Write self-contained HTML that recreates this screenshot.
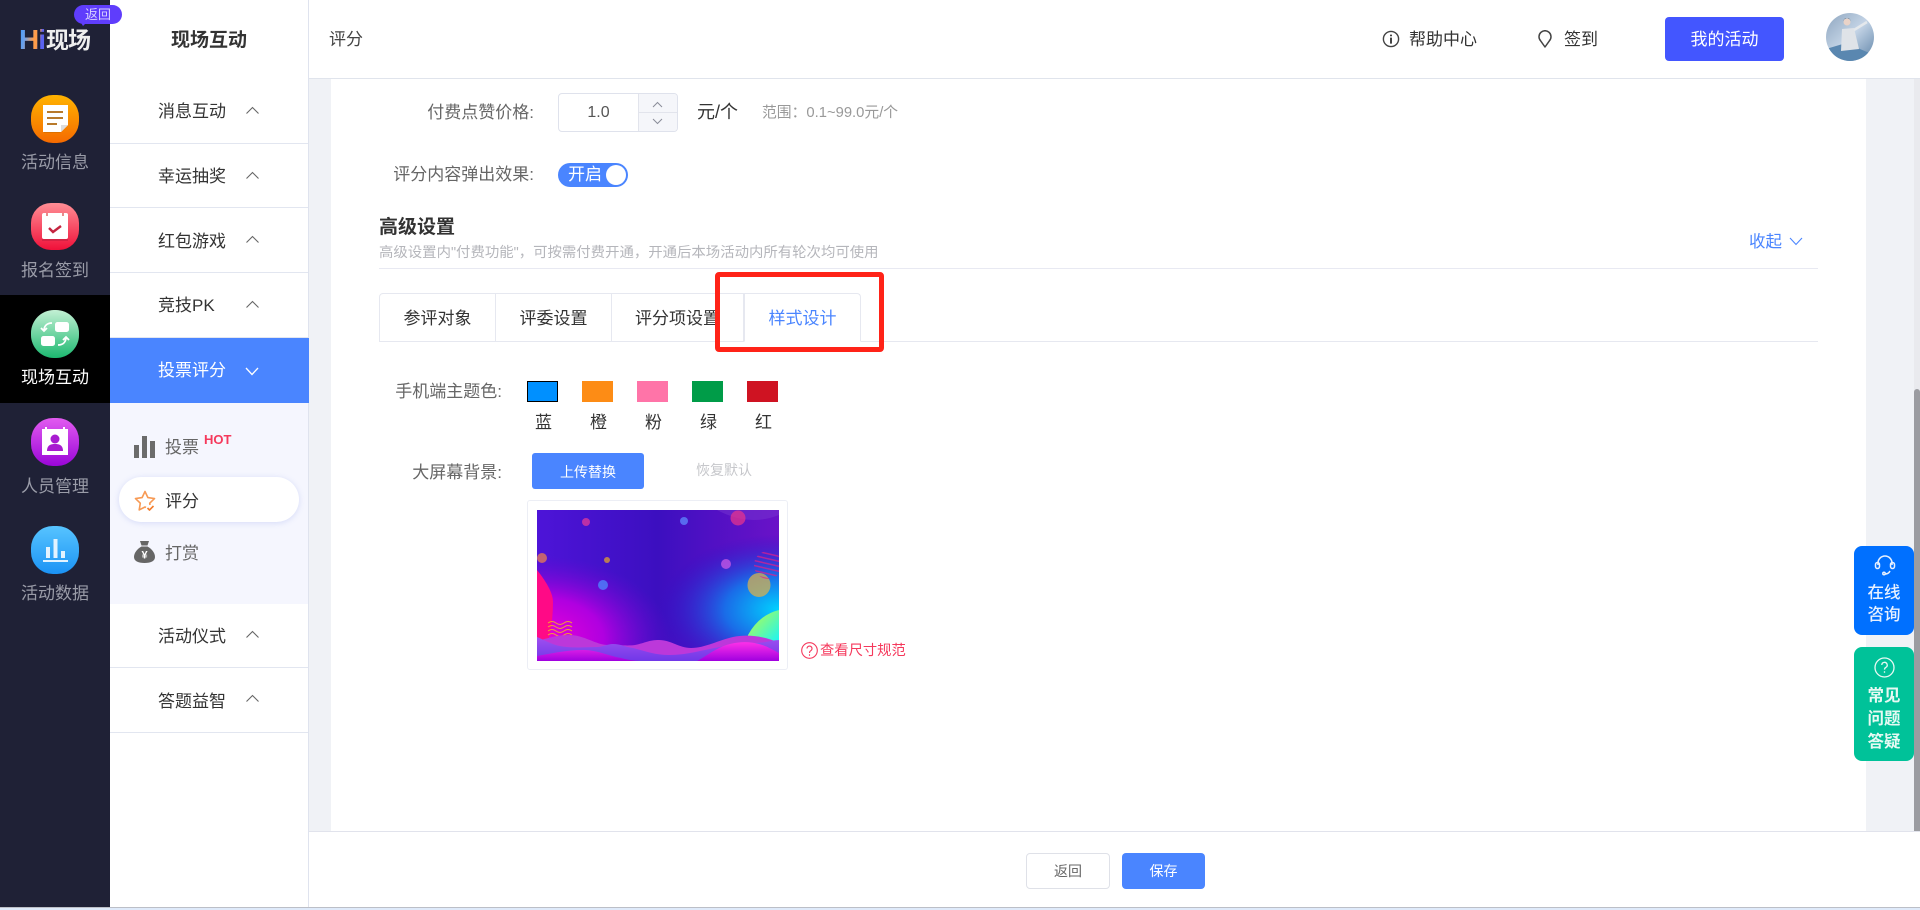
<!DOCTYPE html>
<html lang="zh-CN"><head><meta charset="utf-8"><title>评分</title>
<style>
*{box-sizing:border-box;margin:0;padding:0}
html,body{width:1920px;height:910px;overflow:hidden;background:#f0f2f6;font-family:"Liberation Sans","Noto Sans CJK SC",sans-serif;color:#333}
.a{position:absolute}
.t{position:absolute;white-space:nowrap;line-height:24px;height:24px;font-size:16px}
.nl{position:absolute;left:0;width:110px;text-align:center;color:#9a9ca8;font-size:17px;line-height:24px;white-space:nowrap}
.ic{position:absolute;left:31px;width:48px;height:48px}
.m{position:absolute;left:110px;width:198px;border-bottom:1px solid #e2e6f0;background:#fff}
.m span{position:absolute;left:48px;font-size:17px;line-height:24px;color:#333;white-space:nowrap}
.lb{position:absolute;left:330px;text-align:right;color:#666;font-size:17px;line-height:24px;white-space:nowrap}
.tab{position:absolute;top:293px;height:49px;border:1px solid #e6e8f0;border-left:none;background:#fff;text-align:center;font-size:17px;line-height:49px;color:#333}
.sw{position:absolute;top:381px;width:31px;height:21px}
.cl{position:absolute;top:411px;width:31px;text-align:center;font-size:17px;line-height:24px;color:#333}
</style></head>
<body>
<!-- main background -->
<div class="a" style="left:331px;top:79px;width:1535px;height:752px;background:#fff"></div>
<div class="a" style="left:1914px;top:79px;width:6px;height:752px;background:#e9eaee"></div>
<div class="a" style="left:1914px;top:389px;width:6px;height:442px;background:#9b9ca1;border-radius:3px 3px 0 0"></div>

<!-- header -->
<div class="a" style="left:309px;top:0;width:1611px;height:79px;background:#fff;border-bottom:1px solid #e0e4ec"></div>
<div class="t" style="left:329px;top:28px;font-size:17px;color:#444">评分</div>
<svg class="a" style="left:1382px;top:30px" width="18" height="18" viewBox="0 0 18 18" fill="none" stroke="#444" stroke-width="1.4"><circle cx="9" cy="9" r="7.6"/><path d="M9 7.6v6M9 4.6v1.6" stroke-width="2"/></svg>
<div class="t" style="left:1409px;top:28px;font-size:17px;color:#333">帮助中心</div>
<svg class="a" style="left:1538px;top:30px" width="14" height="18" viewBox="0 0 14 18" fill="none" stroke="#444" stroke-width="1.5"><path d="M7 17 2.6 10.8A6 6 0 1 1 11.4 10.8Z" stroke-linejoin="round"/></svg>
<div class="t" style="left:1564px;top:28px;font-size:17px;color:#333">签到</div>
<div class="a" style="left:1665px;top:17px;width:119px;height:44px;background:#4356ff;border-radius:4px;color:#fff;text-align:center;font-size:17px;line-height:46px">我的活动</div>
<svg class="a" style="left:1826px;top:13px" width="48" height="48" viewBox="0 0 48 48"><defs><clipPath id="av"><circle cx="24" cy="24" r="24"/></clipPath><linearGradient id="avg" x1="0" y1="0" x2="1" y2="1"><stop offset="0" stop-color="#8ea6bf"/><stop offset=".5" stop-color="#c4d4e6"/><stop offset="1" stop-color="#5f84a8"/></linearGradient></defs><g clip-path="url(#av)"><rect width="48" height="48" fill="url(#avg)"/><path d="M0 36 20 30 48 42V48H0Z" fill="#5a87b0"/><path d="M16 16 28 15 33 36 15 38Z" fill="#dfe3e8"/><circle cx="21" cy="9" r="3.500" fill="#e9d3c8"/><path d="M17 8a4.500 4.500 0 0 1 8 0l-2-2.500h-4Z" fill="#222"/><path d="M28 17 41 9" stroke="#e4e8ec" stroke-width="2.500"/></g></svg>

<!-- left nav -->
<div class="a" style="left:0;top:0;width:110px;height:907px;background:#1f2136"></div>
<div class="a" style="left:0;top:295px;width:110px;height:108px;background:#000"></div>
<div class="a" style="left:19px;top:27px;font:bold 28px/26px 'Liberation Sans',sans-serif;letter-spacing:-1px;background:linear-gradient(100deg,#3d9bff 0,#6fa0e8 25%,#ff9d4a 55%,#ff9d4a 68%,#5a62f0 80%);-webkit-background-clip:text;background-clip:text;color:transparent">Hi</div>
<div class="a" style="left:46px;top:27px;font:bold 23px/26px 'Liberation Sans','Noto Sans CJK SC',sans-serif;color:#eee;letter-spacing:-1px;white-space:nowrap">现场</div>

<svg class="ic" style="top:95px" viewBox="0 0 48 48"><defs><linearGradient id="g1" x1="0" y1="0" x2="0" y2="1"><stop offset="0" stop-color="#ffb300"/><stop offset="1" stop-color="#f56a00"/></linearGradient></defs><rect width="48" height="48" rx="22" fill="url(#g1)"/><path d="M13 12H36V31L29 38H13Z" fill="#c96a00" opacity=".6"/><path d="M12 10H37V30L30 37H12Z" fill="#fff"/><path d="M37 30 30 37V30Z" fill="#ddd"/><path d="M16 17H32M16 23H32M16 29H26" stroke="#b87a2b" stroke-width="2"/></svg>
<div class="nl" style="top:151px">活动信息</div>
<svg class="ic" style="top:203px;height:47px" viewBox="0 0 48 47"><defs><linearGradient id="g2" x1="0" y1="0" x2="0" y2="1"><stop offset="0" stop-color="#ff8e95"/><stop offset="1" stop-color="#f01039"/></linearGradient></defs><rect width="48" height="47" rx="20" fill="url(#g2)"/><rect x="11" y="10" width="26" height="26" rx="2" fill="#fff"/><path d="M11 36h26v2H11Z" fill="#b81c3c" opacity=".5"/><path d="M16 10v3M32 10v3" stroke="#d66" stroke-width="1.500"/><path d="M18 25l4 4 8-6" fill="none" stroke="#c4243f" stroke-width="2.400"/></svg>
<div class="nl" style="top:259px">报名签到</div>
<svg class="ic" style="top:310px" viewBox="0 0 48 48"><defs><linearGradient id="g3" x1="0" y1="0" x2="0" y2="1"><stop offset="0" stop-color="#c3f0d4"/><stop offset="1" stop-color="#1cb970"/></linearGradient></defs><rect width="48" height="48" rx="23" fill="url(#g3)"/><rect x="24" y="12" width="14" height="10" rx="2.500" fill="#fff"/><rect x="10" y="26" width="14" height="10" rx="2.500" fill="#fff"/><path d="M21 13c-5 0-8 3-8 8M10 18l3 3 3-3M27 35c5 0 8-3 8-8M32 30l3-3 3 3" fill="none" stroke="#fff" stroke-width="1.800"/></svg>
<div class="nl" style="top:366px;color:#fff">现场互动</div>
<svg class="ic" style="top:418px" viewBox="0 0 48 48"><defs><linearGradient id="g4" x1="0" y1="0" x2="0" y2="1"><stop offset="0" stop-color="#e25bf0"/><stop offset="1" stop-color="#9a06d8"/></linearGradient></defs><rect width="48" height="48" rx="22" fill="url(#g4)"/><rect x="11" y="11" width="26" height="26" fill="#fff"/><path d="M15 9v5M33 9v5" stroke="#fff" stroke-width="2"/><circle cx="24" cy="21" r="4.500" fill="#a81bd0"/><path d="M16 33c0-6 4-7 8-7s8 1 8 7Z" fill="#a81bd0"/></svg>
<div class="nl" style="top:475px">人员管理</div>
<svg class="ic" style="top:526px" viewBox="0 0 48 48"><defs><linearGradient id="g5" x1="0" y1="0" x2="0" y2="1"><stop offset="0" stop-color="#57c4ff"/><stop offset="1" stop-color="#1b93f5"/></linearGradient></defs><rect width="48" height="48" rx="22" fill="url(#g5)"/><path d="M12 35H37" stroke="#e3f3ff" stroke-width="2"/><path d="M15 21h4v11h-4ZM22.500 13h4v19h-4ZM30 25h4v7h-4Z" fill="#e3f3ff"/></svg>
<div class="nl" style="top:582px">活动数据</div>

<!-- second sidebar -->
<div class="a" style="left:110px;top:0;width:199px;height:907px;background:#fff;border-right:1px solid #dfe3ee"></div>
<div class="a" style="left:110px;top:29px;width:198px;text-align:center;font-weight:bold;font-size:19px;line-height:24px;color:#333">现场互动</div>
<div class="m" style="top:79px;height:65px"><span style="top:21px">消息互动</span><svg class="a" style="left:136px;top:27px" width="13" height="8" viewBox="0 0 13 8" fill="none" stroke="#666" stroke-width="1.100"><path d="M.5 7.500 6.500 1.500 12.500 7.500"/></svg></div>
<div class="m" style="top:144px;height:64px"><span style="top:21px">幸运抽奖</span><svg class="a" style="left:136px;top:27px" width="13" height="8" viewBox="0 0 13 8" fill="none" stroke="#666" stroke-width="1.100"><path d="M.5 7.500 6.500 1.500 12.500 7.500"/></svg></div>
<div class="m" style="top:208px;height:65px"><span style="top:22px">红包游戏</span><svg class="a" style="left:136px;top:27px" width="13" height="8" viewBox="0 0 13 8" fill="none" stroke="#666" stroke-width="1.100"><path d="M.5 7.500 6.500 1.500 12.500 7.500"/></svg></div>
<div class="m" style="top:273px;height:65px"><span style="top:21px">竞技PK</span><svg class="a" style="left:136px;top:27px" width="13" height="8" viewBox="0 0 13 8" fill="none" stroke="#666" stroke-width="1.100"><path d="M.5 7.500 6.500 1.500 12.500 7.500"/></svg></div>
<div class="a" style="left:110px;top:338px;width:199px;height:65px;background:#4a85ff"><span class="a" style="left:48px;top:21px;font-size:17px;line-height:24px;color:#fff;white-space:nowrap">投票评分</span><svg class="a" style="left:135px;top:29px" width="14" height="9" viewBox="0 0 14 9" fill="none" stroke="#fff" stroke-width="1.300"><path d="M1 1 7 7.500 13 1"/></svg></div>
<div class="a" style="left:110px;top:403px;width:198px;height:201px;background:#f5f6fe"></div>
<svg class="a" style="left:134px;top:436px" width="21" height="22" viewBox="0 0 21 22" fill="#6b6b6b"><rect x="0" y="9" width="5" height="13"/><rect x="8" y="0" width="5" height="22"/><rect x="16" y="5" width="5" height="17"/></svg>
<div class="t" style="left:165px;top:436px;color:#666;font-size:17px">投票</div>
<div class="t" style="left:204px;top:428px;color:#f5395c;font-size:13px;font-weight:bold">HOT</div>
<div class="a" style="left:119px;top:477px;width:180px;height:45px;background:#fff;border-radius:23px;box-shadow:0 1px 6px rgba(120,140,230,.25)"></div>
<svg class="a" style="left:134px;top:489px" width="22" height="22" viewBox="0 0 22 22" fill="none" stroke="#f79a55" stroke-width="1.600" stroke-linejoin="round"><path d="M12 18.500 11 18 5.200 20.900 6.300 14.200 1.500 9.600 8.100 8.600 11 2.500 13.900 8.600 20.500 9.600 15.700 14.200 16 16"/><path d="M13.500 19 15.500 21 19.500 17" stroke="#f47b2a"/></svg>
<div class="t" style="left:165px;top:490px;color:#333;font-size:17px">评分</div>
<svg class="a" style="left:134px;top:541px" width="21" height="22" viewBox="0 0 21 22"><path d="M6 0H15L13.500 4.500H7.500Z" fill="#666"/><path d="M7.500 5.500H13.500C18 8 21 12 21 16 21 20 17 22 10.500 22 4 22 0 20 0 16 0 12 3 8 7.500 5.500Z" fill="#666"/><text x="10.500" y="17.500" text-anchor="middle" font-size="11" font-weight="bold" fill="#fff" font-family="Liberation Sans,sans-serif">¥</text></svg>
<div class="t" style="left:165px;top:542px;color:#666;font-size:17px">打赏</div>
<div class="m" style="top:604px;height:64px;left:110px"><span style="top:21px">活动仪式</span><svg class="a" style="left:136px;top:26px" width="13" height="8" viewBox="0 0 13 8" fill="none" stroke="#666" stroke-width="1.100"><path d="M.5 7.500 6.500 1.500 12.500 7.500"/></svg></div>
<div class="m" style="top:668px;height:65px"><span style="top:22px">答题益智</span><svg class="a" style="left:136px;top:26px" width="13" height="8" viewBox="0 0 13 8" fill="none" stroke="#666" stroke-width="1.100"><path d="M.5 7.500 6.500 1.500 12.500 7.500"/></svg></div>

<!-- return badge above sidebars -->
<div class="a" style="left:74px;top:5px;width:48px;height:19px;background:#5f3dfc;border-radius:10px;text-align:center;color:#d9d2ff;font-size:13px;line-height:19px;z-index:5">返回</div>
<div class="a" style="left:80px;top:21px;width:0;height:0;border-left:3px solid transparent;border-right:5px solid transparent;border-top:5px solid #5f3dfc;z-index:5"></div>

<!-- form -->
<div class="lb" style="width:204px;top:101px">付费点赞价格:</div>
<div class="a" style="left:558px;top:93px;width:120px;height:39px;border:1px solid #dfe2ec;border-radius:4px;background:#fff;overflow:hidden"><div class="a" style="left:0;top:0;width:79px;height:37px;text-align:center;font-size:16px;line-height:37px;color:#555">1.0</div><div class="a" style="left:79px;top:0;width:40px;height:37px;background:#f5f6fa;border-left:1px solid #e2e4ec"></div><div class="a" style="left:79px;top:18px;width:40px;height:1px;background:#e2e4ec"></div><svg class="a" style="left:93px;top:7px" width="11" height="24" viewBox="0 0 11 24" fill="none" stroke="#8a8d99"><path d="M1 6 5.500 1.500 10 6M1 18 5.500 22.500 10 18"/></svg></div>
<div class="t" style="left:697px;top:100px;color:#333;font-size:18px">元/个</div>
<div class="t" style="left:762px;top:101px;color:#999;font-size:14.800px">范围：0.1~99.0元/个</div>
<div class="lb" style="width:204px;top:163px">评分内容弹出效果:</div>
<div class="a" style="left:558px;top:163px;width:70px;height:24px;background:#4a85ff;border-radius:12px"><span class="a" style="left:10px;top:0;color:#fff;font-size:17px;line-height:24px;white-space:nowrap">开启</span><span class="a" style="left:48px;top:2px;width:20px;height:20px;border-radius:50%;background:#fff"></span></div>
<div class="t" style="left:379px;top:216px;font-weight:bold;font-size:19px;color:#333">高级设置</div>
<div class="t" style="left:379px;top:241px;font-size:14.400px;color:#b5b6bb">高级设置内"付费功能"，可按需付费开通，开通后本场活动内所有轮次均可使用</div>
<div class="t" style="left:1749px;top:230px;font-size:16.500px;color:#4a85ff">收起</div>
<svg class="a" style="left:1789px;top:237px" width="14" height="9" viewBox="0 0 14 9" fill="none" stroke="#4a85ff" stroke-width="1.100"><path d="M1 1 7 7.500 13 1"/></svg>
<div class="a" style="left:379px;top:268px;width:1439px;height:1px;background:#e8e9f2"></div>

<div class="a" style="left:379px;top:341px;width:1439px;height:1px;background:#e6e8f0"></div>
<div class="tab" style="left:379px;width:117px;border-left:1px solid #e6e8f0;border-radius:4px 0 0 0">参评对象</div>
<div class="tab" style="left:496px;width:116px">评委设置</div>
<div class="tab" style="left:612px;width:132px">评分项设置</div>
<div class="tab" style="left:744px;width:117px;border-left:1px solid #e6e8f0;border-bottom:1px solid #fff;border-radius:0 4px 0 0;color:#4a85ff">样式设计</div>
<div class="a" style="left:715px;top:272px;width:169px;height:80px;border:5.500px solid #ff2318;border-radius:4px"></div>

<div class="lb" style="width:172px;top:380px">手机端主题色:</div>
<div class="sw" style="left:527px;background:#0090ff;border:1px solid #000"></div>
<div class="sw" style="left:582px;background:#fd8c15"></div>
<div class="sw" style="left:637px;background:#ff74a8"></div>
<div class="sw" style="left:692px;background:#009c48"></div>
<div class="sw" style="left:747px;background:#cf1322"></div>
<div class="cl" style="left:528px">蓝</div><div class="cl" style="left:583px">橙</div><div class="cl" style="left:638px">粉</div><div class="cl" style="left:693px">绿</div><div class="cl" style="left:748px">红</div>

<div class="lb" style="width:172px;top:461px">大屏幕背景:</div>
<div class="a" style="left:532px;top:453px;width:112px;height:36px;background:#4a85ff;border-radius:3px;color:#fff;text-align:center;font-size:14px;line-height:38px">上传替换</div>
<div class="t" style="left:696px;top:458px;color:#c6c7cb;font-size:14px">恢复默认</div>
<div class="a" style="left:527px;top:500px;width:261px;height:170px;border:1px solid #eceef5;border-radius:3px;background:#fff"></div>
<svg class="a" style="left:537px;top:510px" width="242" height="151" viewBox="0 0 242 151">
<defs>
<linearGradient id="b1" x1="0" y1="0" x2="1" y2="0"><stop offset="0" stop-color="#4d14d8"/><stop offset=".5" stop-color="#3c0fc0"/><stop offset="1" stop-color="#6a12c8"/></linearGradient>
<radialGradient id="b2" cx="1" cy=".66" r=".5"><stop offset="0" stop-color="#00d2ff"/><stop offset=".45" stop-color="#1a6ce8"/><stop offset="1" stop-color="#2a10c8" stop-opacity="0"/></radialGradient>
<radialGradient id="b3" cx="0" cy=".85" r=".55"><stop offset="0" stop-color="#ef00d8"/><stop offset=".5" stop-color="#b000e0"/><stop offset="1" stop-color="#6a08d0" stop-opacity="0"/></radialGradient>
<linearGradient id="b4" x1="0" y1="0" x2="1" y2="1"><stop offset="0" stop-color="#c6ff3a"/><stop offset="1" stop-color="#12f4ff"/></linearGradient>
<linearGradient id="b5" x1="0" y1="0" x2="0" y2="1"><stop offset="0" stop-color="#ff30e8"/><stop offset="1" stop-color="#a000e0"/></linearGradient>
<linearGradient id="b6" x1="0" y1="0" x2="0" y2="1"><stop offset="0" stop-color="#a050f0"/><stop offset="1" stop-color="#7038e8"/></linearGradient>
<clipPath id="cs"><circle cx="231" cy="55" r="14"/></clipPath>
</defs>
<rect width="242" height="151" fill="url(#b1)"/><rect width="242" height="151" fill="url(#b3)"/><rect width="242" height="151" fill="url(#b2)"/>
<path d="M180 0H242V5Q212 17 180 0Z" fill="#7a3ad0" opacity=".45"/>
<path d="M0 60 Q16 80 16 92 Q16 115 10 135 L0 135Z" fill="#ff0a86"/>
<path d="M211 125 Q222 105 242 100V135H210Z" fill="url(#b4)"/>
<g opacity=".75"><circle cx="49" cy="12" r="4" fill="#e13a9a"/><circle cx="147" cy="11" r="4" fill="#5f88ff"/><circle cx="201" cy="8" r="7.500" fill="#e4338f"/><circle cx="5" cy="48" r="5" fill="#ea7e50"/><circle cx="70" cy="50" r="3" fill="#e0a030"/><circle cx="189" cy="54" r="5" fill="#c95ae6"/><circle cx="66" cy="75" r="5" fill="#4d8cff"/><ellipse cx="222" cy="75" rx="11.500" ry="12" fill="#d6b050"/></g>
<g clip-path="url(#cs)" stroke="#e0208c" stroke-width="1.500" opacity=".7"><path d="M215 40 245 47M215 45 245 52M215 50 245 57M215 55 245 62M215 60 245 67M215 65 245 72"/></g>
<path d="M11 113q4-3 8 0t8 0 8 0M11 117q4-3 8 0t8 0 8 0M11 121q4-3 8 0t8 0 8 0M11 125q4-3 8 0t8 0 8 0" stroke="#f5a030" stroke-width="1" fill="none"/>
<path d="M0 131C12 128 20 125 32 125 48 125 58 135 72 135 84 135 90 136 98 135 108 133 112 130 122 130 134 130 142 138 154 138 168 138 182 130 196 127 210 124 228 126 242 133V151H0Z" fill="#bc38da"/>
<path d="M0 127C8 130 16 136 30 137 42 138 50 137 60 137 66 137 70 134 76 134 84 134 88 137 96 138 108 141 118 145 132 145 146 145 158 142 168 140 186 136 204 133 218 133 228 133 236 130 242 130V151H0Z" fill="url(#b6)"/>
<path d="M0 146C12 144 28 140 47 140 60 140 72 146 84 148 92 150 98 151 106 151H160C170 146 178 138 193 134 205 131 214 132 222 134 230 136 236 140 242 143V151H0Z" fill="url(#b5)"/>
</svg>
<svg class="a" style="left:801px;top:642px" width="17" height="17" viewBox="0 0 17 17" fill="none" stroke="#f5395c" stroke-width="1.100"><circle cx="8.500" cy="8.500" r="7.800"/><path d="M6 6.500a2.500 2.500 0 1 1 3.800 2.200C8.800 9.300 8.500 10 8.500 11M8.500 12.300v1.400"/></svg>
<div class="t" style="left:820px;top:639px;color:#f5395c;font-size:14.300px">查看尺寸规范</div>

<!-- float buttons -->
<div class="a" style="left:1854px;top:546px;width:60px;height:89px;background:#0070ff;border-radius:8px;color:#e8f1ff;text-align:center;font-size:16.500px;font-weight:500;line-height:22px"><svg class="a" style="left:20px;top:8px" width="22" height="22" viewBox="0 0 22 22" fill="none" stroke="#e8f1ff" stroke-width="1.500"><path d="M4 11V9a7 7 0 0 1 14 0v2M16 17c-1 2-3 3-5 3"/><rect x="1.500" y="8.500" width="4" height="6" rx="2"/><rect x="16.500" y="8.500" width="4" height="6" rx="2"/><circle cx="10" cy="19.500" r="1.200"/></svg><div class="a" style="left:0;width:60px;top:36px">在线<br>咨询</div></div>
<div class="a" style="left:1854px;top:647px;width:60px;height:114px;background:#00c299;border-radius:8px;color:#e6f9f3;text-align:center;font-size:16.500px;font-weight:bold;line-height:23px"><svg class="a" style="left:20px;top:10px" width="21" height="21" viewBox="0 0 21 21" fill="none" stroke="#e6f9f3" stroke-width="1.300"><circle cx="10.500" cy="10.500" r="9.500"/><path d="M7.800 8a2.700 2.700 0 1 1 4 2.400c-1 .6-1.300 1.200-1.300 2.200M10.500 14.200v1.500"/></svg><div class="a" style="left:0;width:60px;top:38px">常见<br>问题<br>答疑</div></div>

<!-- footer -->
<div class="a" style="left:309px;top:831px;width:1611px;height:76px;background:#fff;border-top:1px solid #e1e3ec"></div>
<div class="a" style="left:1026px;top:853px;width:84px;height:36px;border:1px solid #dfe1e8;border-radius:4px;background:#fff;text-align:center;font-size:14px;line-height:34px;color:#666">返回</div>
<div class="a" style="left:1122px;top:853px;width:83px;height:36px;background:#4a85ff;border-radius:4px;text-align:center;font-size:14px;line-height:36px;color:#fff">保存</div>
<div class="a" style="left:0;top:907px;width:1920px;height:1px;background:#bcbfc7"></div>
<div class="a" style="left:0;top:908px;width:1920px;height:2px;background:#dfeafa"></div>
</body></html>
